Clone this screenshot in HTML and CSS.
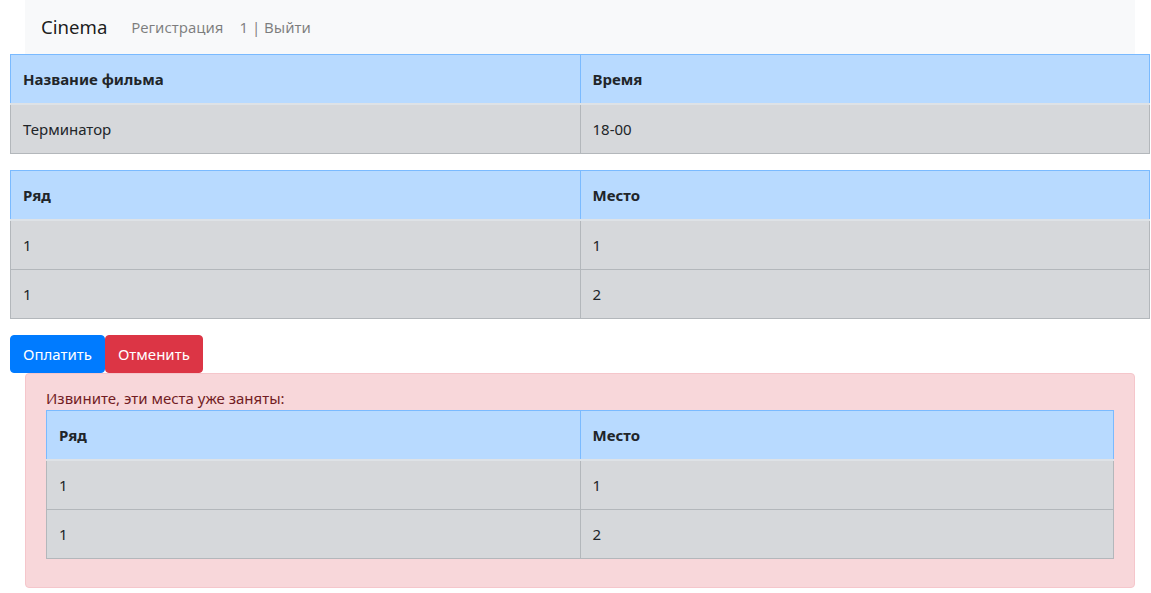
FILE: index.html
```html
<!DOCTYPE html>
<html lang="ru">
<head>
<meta charset="utf-8">
<title>Cinema</title>
<link rel="stylesheet" href="styles.css">
</head>
<body>
<div class="page">
  <nav class="navbar">
    <a class="brand" href="#">Cinema</a>
    <a class="nav-link" href="#">Регистрация</a>
    <a class="nav-link" href="#">1 | Выйти</a>
  </nav>

  <table class="table">
    <thead>
      <tr class="row-primary"><th>Название фильма</th><th>Время</th></tr>
    </thead>
    <tbody>
      <tr class="row-secondary"><td>Терминатор</td><td>18-00</td></tr>
    </tbody>
  </table>

  <table class="table">
    <thead>
      <tr class="row-primary"><th>Ряд</th><th>Место</th></tr>
    </thead>
    <tbody>
      <tr class="row-secondary"><td>1</td><td>1</td></tr>
      <tr class="row-secondary"><td>1</td><td>2</td></tr>
    </tbody>
  </table>

  <div class="buttons">
    <button class="btn btn-primary">Оплатить</button><button class="btn btn-danger">Отменить</button>
  </div>

  <div class="alert">
    <div class="alert-text">Извините, эти места уже заняты:</div>
    <table class="table table-inner">
      <thead>
        <tr class="row-primary"><th>Ряд</th><th>Место</th></tr>
      </thead>
      <tbody>
        <tr class="row-secondary"><td>1</td><td>1</td></tr>
        <tr class="row-secondary"><td>1</td><td>2</td></tr>
      </tbody>
    </table>
  </div>
</div>
</body>
</html>
```

FILE: styles.css
```css
html, body {
  margin: 0;
  padding: 0;
  background: #fff;
}
body {
  font-family: "Noto Sans", "Open Sans", "DejaVu Sans", sans-serif;
  font-size: 15px;
  line-height: 24px;
  color: #212529;
}
.page {
  width: 1140px;
  padding: 0 10px;
}
.navbar {
  margin: 0 15px;
  height: 54px;
  background: #f8f9fa;
  display: flex;
  align-items: center;
  padding: 0 16px;
  box-sizing: border-box;
}
.brand {
  font-size: 18.6px;
  color: rgba(0,0,0,0.9);
  text-decoration: none;
  margin-right: 16px;
  line-height: 30px;
}
.nav-link {
  color: rgba(0,0,0,0.5);
  text-decoration: none;
  padding: 0 8px;
}
.table {
  width: 100%;
  border-collapse: collapse;
  margin-bottom: 16px;
  table-layout: fixed;
}
.table th, .table td {
  text-align: left;
  padding: 12px 12px;
  vertical-align: top;
  height: 24px;
}
.table th {
  font-weight: bold;
}
.row-primary th {
  background: #b8daff;
  border: 1px solid #7abaff;
  border-bottom: 2px solid #dee2e6;
}
.row-secondary td {
  background: #d6d8db;
  border: 1px solid #b3b7bb;
}
.buttons {
  display: flex;
}
.btn {
  font-family: inherit;
  font-size: 15px;
  line-height: 24px;
  padding: 6px 12px;
  border: 1px solid transparent;
  border-radius: 4px;
  color: #fff;
  cursor: pointer;
}
.btn-primary {
  background: #007bff;
  border-color: #007bff;
}
.btn-danger {
  background: #dc3545;
  border-color: #dc3545;
}
.alert {
  margin: 0 15px;
  background: #f8d7da;
  border: 1px solid #f5c6cb;
  border-radius: 4px;
  padding: 12px 20px;
  color: #721c24;
}
.alert-text {
  line-height: 24px;
}
.table-inner {
  color: #212529;
}
```
